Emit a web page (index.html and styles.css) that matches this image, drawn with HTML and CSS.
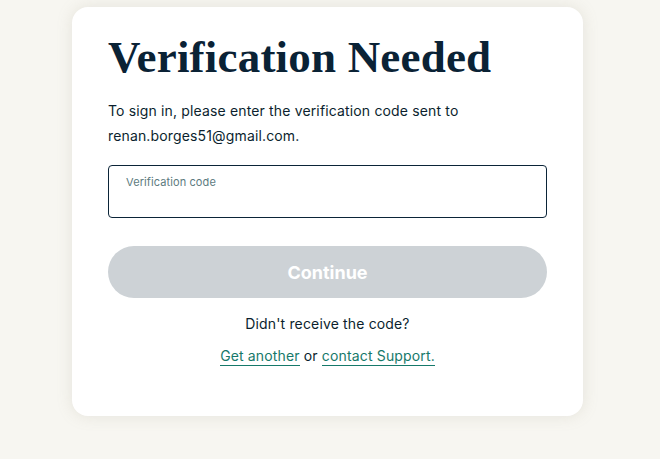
FILE: index.html
```html
<!DOCTYPE html>
<html lang="en">
<head>
<meta charset="utf-8">
<title>Verification Needed</title>
<link rel="stylesheet" href="styles.css">
</head>
<body>
<main class="card">
  <h1 class="title">Verification Needed</h1>
  <p class="intro">To sign in, please enter the verification code sent to renan.borges51@gmail.com.</p>
  <label class="field">
    <span class="field-label">Verification code</span>
    <input class="field-input" type="text" inputmode="numeric">
  </label>
  <button class="btn" type="button" disabled>Continue</button>
  <p class="help">Didn't receive the code?</p>
  <p class="links"><a class="link" href="#">Get another</a> or <a class="link" href="#">contact Support.</a></p>
</main>
</body>
</html>
```
FILE: styles.css
```css
html, body {
  margin: 0;
  padding: 0;
}
body {
  background: #f7f6f1;
  font-family: Inter, "Noto Sans", sans-serif;
  color: #0b1f2e;
  letter-spacing: 0.15px;
  min-height: 459px;
}
.card {
  box-sizing: border-box;
  width: 511px;
  height: 409px;
  margin: 7px 0 0 72px;
  padding: 24px 36px 0;
  background: #ffffff;
  border-radius: 16px;
  box-shadow: 0 0 16px rgba(150, 145, 120, 0.18);
  display: flex;
  flex-direction: column;
}
.title {
  margin: 0;
  font-family: "Liberation Serif", "DejaVu Serif", serif;
  font-weight: 700;
  font-size: 45px;
  line-height: 52px;
  color: #0a2235;
  letter-spacing: 0.2px;
}
.intro {
  margin: 15px 0 0;
  font-size: 14px;
  line-height: 25px;
}
.field {
  margin-top: 17px;
  box-sizing: border-box;
  height: 53px;
  border: 1px solid #0b2438;
  border-radius: 4px;
  padding: 9px 17px 0;
  display: flex;
  flex-direction: column;
}
.field-label {
  font-size: 11px;
  line-height: 14px;
  color: #5d7b80;
  letter-spacing: 0.1px;
}
.field-input {
  border: 0;
  outline: 0;
  padding: 0;
  font: inherit;
  font-size: 14px;
  background: transparent;
}
.btn {
  margin-top: 28px;
  height: 52px;
  border: 0;
  border-radius: 26px;
  background: #cdd2d6;
  color: #ffffff;
  font-family: Inter, "Noto Sans", sans-serif;
  font-weight: 700;
  font-size: 18px;
  letter-spacing: 0;
}
.help {
  margin: 16px 0 0;
  text-align: center;
  font-size: 14px;
  line-height: 20px;
}
.links {
  margin: 12px 0 0;
  text-align: center;
  font-size: 14px;
  line-height: 20px;
}
.link {
  color: #16796a;
  text-decoration: none;
  border-bottom: 1px solid #16796a;
  padding-bottom: 1px;
}
```
